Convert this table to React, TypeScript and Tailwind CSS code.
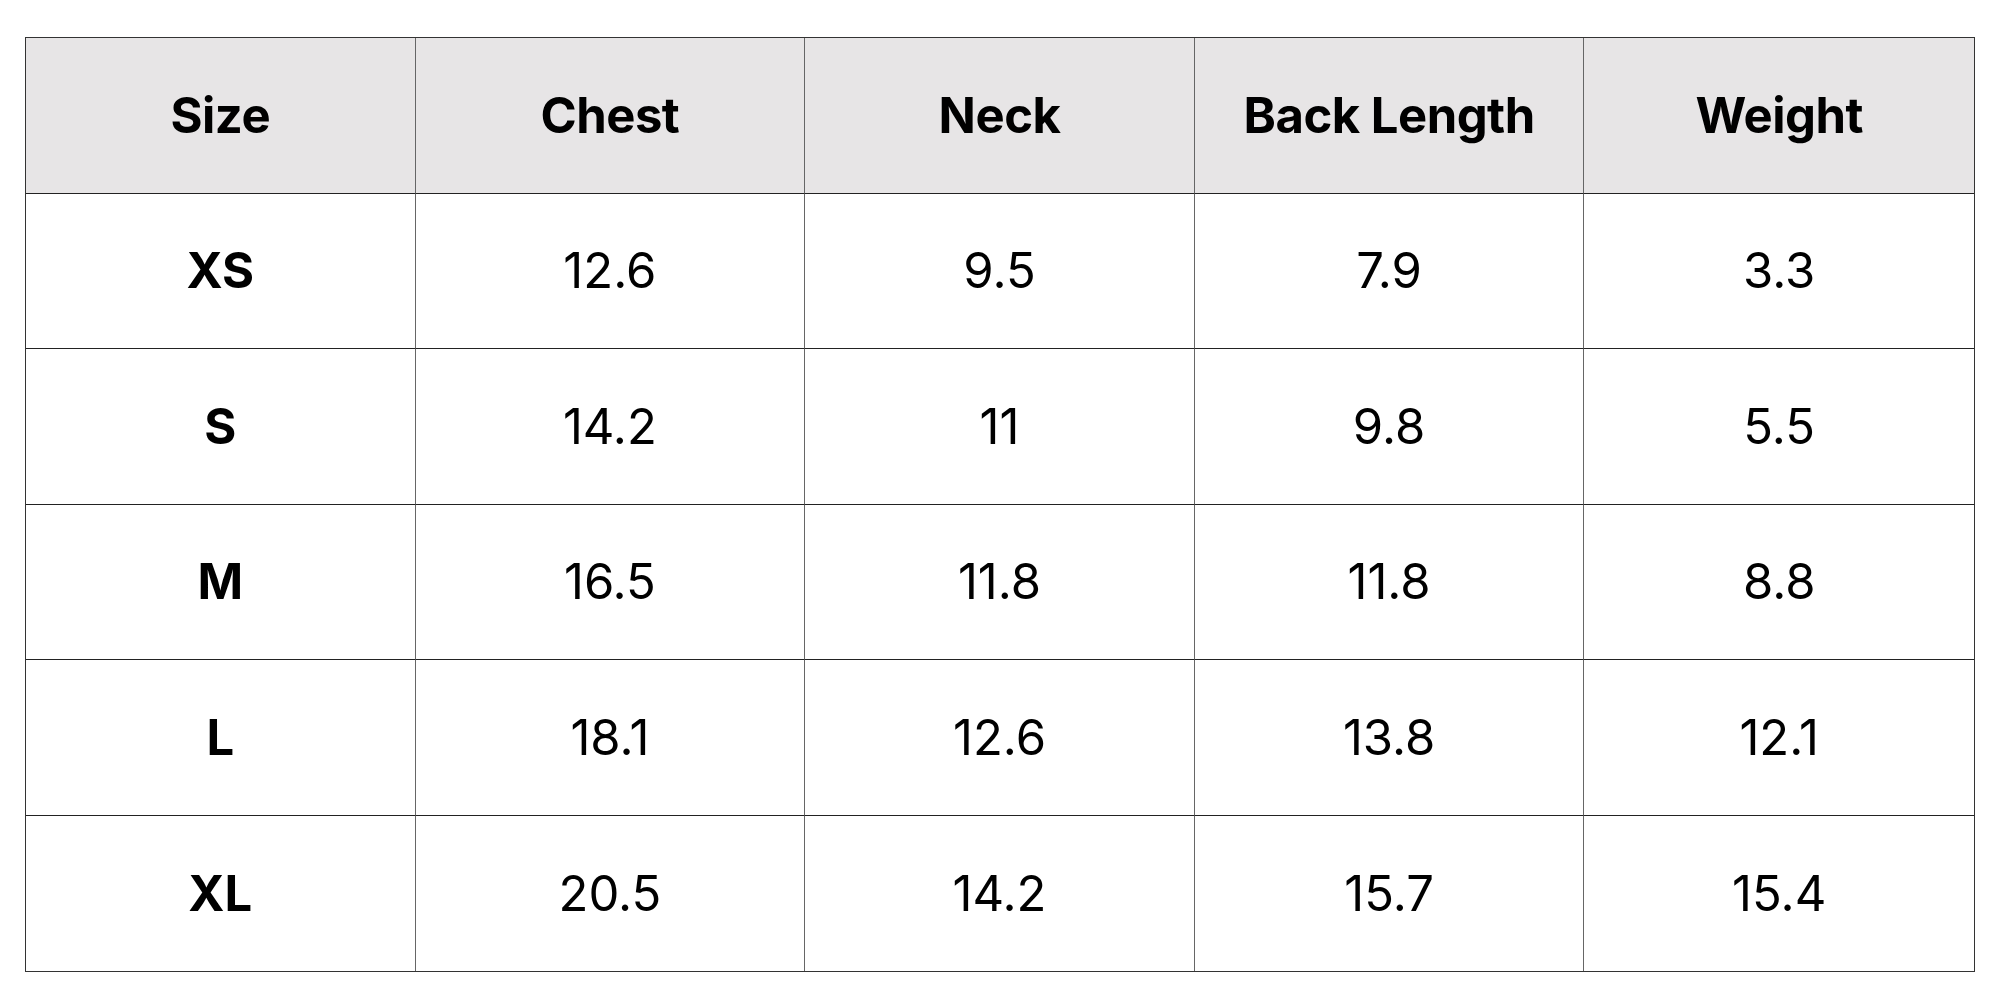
const headers = ['Size', 'Chest', 'Neck', 'Back Length', 'Weight'];

const rows = [
  ['XS', '12.6', '9.5', '7.9', '3.3'],
  ['S', '14.2', '11', '9.8', '5.5'],
  ['M', '16.5', '11.8', '11.8', '8.8'],
  ['L', '18.1', '12.6', '13.8', '12.1'],
  ['XL', '20.5', '14.2', '15.7', '15.4'],
];

export default function App() {
  return (
    <div className="w-[2000px] h-[1000px] bg-white pl-[25px] pt-[37px] font-['Inter',sans-serif] text-black">
      <div className="w-[1950px] border-[1.5px] border-[#333] grid grid-cols-5">
        {headers.map((h, i) => (
          <div
            key={h}
            className={`h-[155.5px] bg-[#e7e5e6] flex items-center justify-center text-[49px] font-bold tracking-[-0.5px] border-b-[1.5px] border-[#222] ${i < 4 ? 'border-r-[1.5px] border-r-[#666]' : ''}`}
          >
            {h}
          </div>
        ))}
        {rows.map((r, ri) =>
          r.map((c, ci) => (
            <div
              key={`${ri}-${ci}`}
              className={`h-[155.5px] flex items-center justify-center text-[49px] ${ci === 0 ? 'font-bold' : 'font-normal'} ${ri < rows.length - 1 ? 'border-b-[1.5px] border-[#222]' : ''} ${ci < 4 ? 'border-r-[1.5px] border-r-[#666]' : ''}`}
            >
              {c}
            </div>
          ))
        )}
      </div>
    </div>
  );
}
